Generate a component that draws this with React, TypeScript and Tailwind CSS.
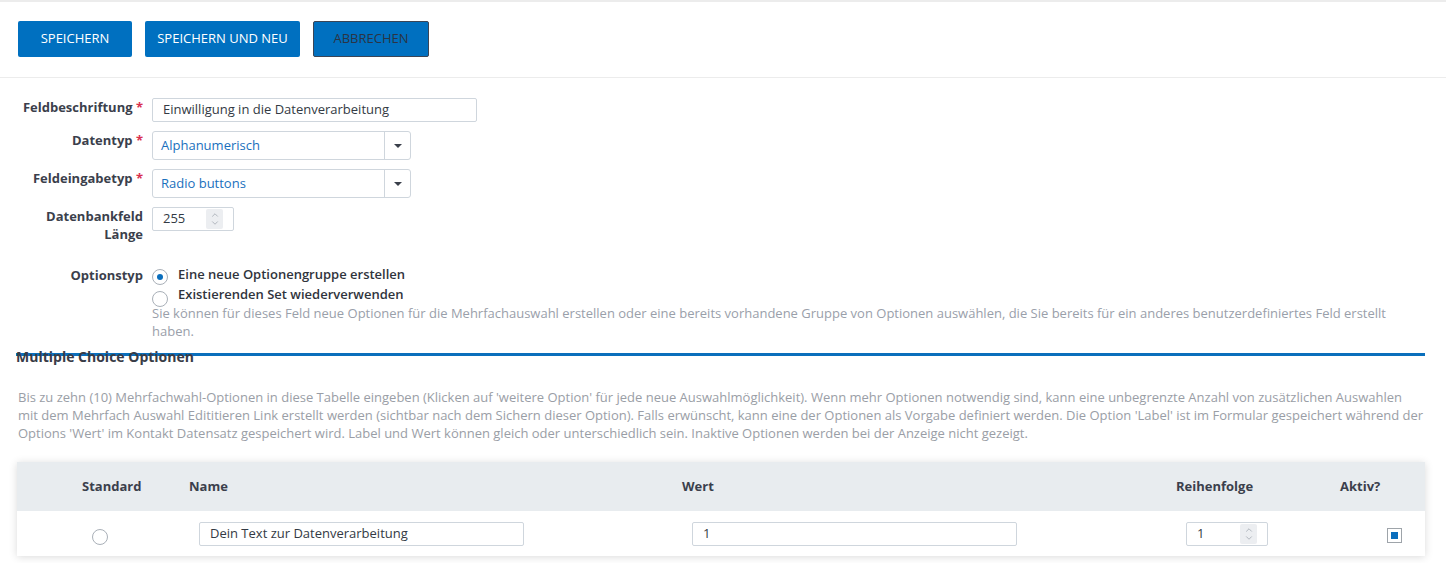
import { ChevronUp, ChevronDown } from 'lucide-react';

const font = { fontFamily: '"Open Sans", "Liberation Sans", sans-serif' };

function Spinner() {
  return (
    <div className="flex flex-col items-center justify-center w-[17px] h-[20px] bg-[#eceef1] rounded-[2px] text-[#8d959e]">
      <ChevronUp className="w-[10px] h-[10px] -mb-[1px]" strokeWidth={1.5} />
      <ChevronDown className="w-[10px] h-[10px] -mt-[1px]" strokeWidth={1.5} />
    </div>
  );
}

function Select({ value }: { value: string }) {
  return (
    <div className="flex items-stretch w-[259px] h-[29px] border border-[#cfd6dd] rounded-[3px] bg-white">
      <div className="flex-1 flex items-center px-[8px] text-[13px] text-[#1a70bd]">{value}</div>
      <div className="w-[26px] border-l border-[#cfd6dd] flex items-center justify-center">
        <span className="block w-0 h-0 border-l-[4px] border-r-[4px] border-t-[4px] border-l-transparent border-r-transparent border-t-[#3a3f4a]" />
      </div>
    </div>
  );
}

function Label({ children, required }: { children: React.ReactNode; required?: boolean }) {
  return (
    <div className="w-[143px] shrink-0 text-right text-[13px] leading-[18px] font-bold text-[#3b3f4c]">
      {children}
      {required && <span className="text-[#d9304f]"> *</span>}
    </div>
  );
}

export default function App() {
  return (
    <div className="w-[1446px] h-[563px] bg-white overflow-hidden" style={font}>
      {/* Toolbar */}
      <div className="border-t-2 border-b border-[#ececec] px-[18px] pt-[19px] pb-[20px] flex gap-[13px]">
        <button className="h-[36px] w-[114px] bg-[#0070c0] rounded-[2px] text-white text-[13px]">SPEICHERN</button>
        <button className="h-[36px] w-[155px] bg-[#0070c0] rounded-[2px] text-white text-[13px]">SPEICHERN UND NEU</button>
        <button className="h-[36px] w-[116px] bg-[#0070c0] rounded-[2px] border border-[#3b4556] text-[#2b3444] text-[13px]">ABBRECHEN</button>
      </div>

      {/* Form */}
      <div className="pt-[20px] flex flex-col gap-[9px]">
        <div className="flex gap-[9px]">
          <Label required>Feldbeschriftung</Label>
          <div className="w-[325px] h-[24px] border border-[#cfd6dd] rounded-[2px] flex items-center px-[10px] text-[13px] text-[#333a44]">
            Einwilligung in die Datenverarbeitung
          </div>
        </div>
        <div className="flex gap-[9px]">
          <Label required>Datentyp</Label>
          <Select value="Alphanumerisch" />
        </div>
        <div className="flex gap-[9px]">
          <Label required>Feldeingabetyp</Label>
          <Select value="Radio buttons" />
        </div>
        <div className="flex gap-[9px]">
          <Label>
            Datenbankfeld
            <br />
            Länge
          </Label>
          <div className="w-[82px] h-[24px] border border-[#cfd6dd] rounded-[2px] flex items-center justify-between pl-[10px] pr-[10px] text-[13px] text-[#333a44]">
            255
            <Spinner />
          </div>
        </div>
      </div>

      <div className="mt-[23px] flex gap-[9px]">
        <Label>Optionstyp</Label>
        <div className="flex-1">
          <div className="flex items-center gap-[10px] h-[18px]">
            <span className="w-[16px] h-[16px] rounded-full border border-[#a9b0b8] flex items-center justify-center mt-[3px]">
              <span className="w-[6px] h-[6px] rounded-full bg-[#0a6ebd]" />
            </span>
            <span className="text-[13px] font-semibold text-[#30343c]">Eine neue Optionengruppe erstellen</span>
          </div>
          <div className="flex items-start gap-[10px] h-[20px]">
            <span className="w-[16px] h-[16px] rounded-full border border-[#a9b0b8] mt-[7px]" />
            <span className="text-[13px] leading-[20px] font-semibold text-[#30343c]">Existierenden Set wiederverwenden</span>
          </div>
          <p className="text-[13px] leading-[18px] text-[#9aa0aa] whitespace-nowrap">
            Sie können für dieses Feld neue Optionen für die Mehrfachauswahl erstellen oder eine bereits vorhandene Gruppe von Optionen auswählen, die Sie bereits für ein anderes benutzerdefiniertes Feld erstellt
            <br />
            haben.
          </p>
        </div>
      </div>

      {/* Section */}
      <div className="pl-[16px] pr-[21px] mt-[13px]">
        <div className="h-[3px] bg-[#0a6fbc]" />
        <h2 className="-mt-[8px] text-[14px] leading-[18px] font-bold text-[#383c47]">Multiple Choice Optionen</h2>
        <p className="mt-[22px] pl-[2px] text-[13px] leading-[18px] text-[#9a9ea6] whitespace-nowrap">
          Bis zu zehn (10) Mehrfachwahl-Optionen in diese Tabelle eingeben (Klicken auf 'weitere Option' für jede neue Auswahlmöglichkeit). Wenn mehr Optionen notwendig sind, kann eine unbegrenzte Anzahl von zusätzlichen Auswahlen
          <br />
          mit dem Mehrfach Auswahl Edititieren Link erstellt werden (sichtbar nach dem Sichern dieser Option). Falls erwünscht, kann eine der Optionen als Vorgabe definiert werden. Die Option 'Label' ist im Formular gespeichert während der
          <br />
          Options 'Wert' im Kontakt Datensatz gespeichert wird. Label und Wert können gleich oder unterschiedlich sein. Inaktive Optionen werden bei der Anzeige nicht gezeigt.
        </p>

        {/* Table */}
        <div className="mt-[20px] ml-[1px] bg-white shadow-[0_1px_8px_rgba(0,0,0,0.15)]">
          <div className="grid grid-cols-[65px_107px_493px_494px_164px_1fr] h-[49px] items-center bg-[#e8ecef] text-[13px] font-bold text-[#3b3f4c]">
            <div />
            <div>Standard</div>
            <div>Name</div>
            <div>Wert</div>
            <div>Reihenfolge</div>
            <div>Aktiv?</div>
          </div>
          <div className="grid grid-cols-[65px_107px_493px_494px_164px_1fr] h-[45px] items-center text-[13px] text-[#333a44]">
            <div />
            <div className="pl-[10px] pt-[6px]">
              <span className="block w-[16px] h-[16px] rounded-full border border-[#a9b0b8]" />
            </div>
            <div className="pl-[10px]">
              <div className="w-[325px] h-[24px] border border-[#cfd6dd] rounded-[2px] flex items-center px-[10px]">
                Dein Text zur Datenverarbeitung
              </div>
            </div>
            <div className="pl-[10px]">
              <div className="w-[325px] h-[24px] border border-[#cfd6dd] rounded-[2px] flex items-center px-[10px]">1</div>
            </div>
            <div className="pl-[10px]">
              <div className="w-[82px] h-[24px] border border-[#cfd6dd] rounded-[2px] flex items-center justify-between pl-[10px] pr-[10px]">
                1
                <Spinner />
              </div>
            </div>
            <div className="pl-[47px] pt-[4px]">
              <span className="w-[15px] h-[15px] border border-[#9ea4aa] flex items-center justify-center">
                <span className="w-[7px] h-[7px] bg-[#0a6ebd]" />
              </span>
            </div>
          </div>
        </div>
      </div>
    </div>
  );
}
